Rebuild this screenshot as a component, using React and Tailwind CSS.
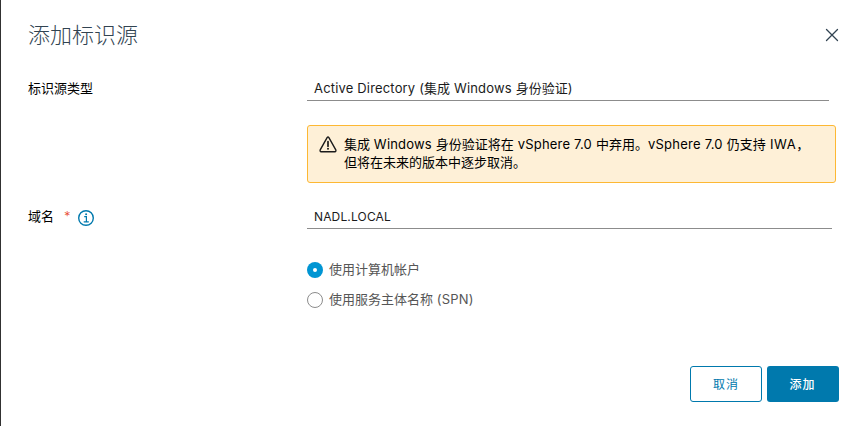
import React from "react";

function L({ children, className = "tracking-[0.17px]" }) {
  return <span className={"whitespace-pre " + className}>{children}</span>;
}

function CloseIcon() {
  return (
    <svg width="14" height="14" viewBox="0 0 14 14" fill="none" stroke="#314351" strokeWidth="1.3" strokeLinecap="round">
      <path d="M1.5 1.5 12.5 12.5M12.5 1.5 1.5 12.5" />
    </svg>
  );
}

function WarningIcon() {
  return (
    <svg width="18" height="17" viewBox="0 0 18 17" fill="none" stroke="#1b1b1b" strokeWidth="1.4" strokeLinejoin="round" strokeLinecap="round">
      <path d="M8.1 1.6 1.2 13.9Q.7 15.6 2.2 15.8H15.8Q17.300 15.6 16.8 13.9L9.900 1.600Q9 .5 8.100 1.600Z" />
      <path d="M9 5.500V10.200" strokeWidth="1.700" />
      <circle cx="9" cy="12.700" r="1" fill="#1b1b1b" stroke="none" />
    </svg>
  );
}

function InfoIcon() {
  return (
    <svg width="16" height="16" viewBox="0 0 16 16" fill="none" stroke="#0079ad" strokeWidth="1.4">
      <circle cx="8" cy="8" r="7.300" />
      <path d="M6.200 6.700H8.400V11.700M5.700 11.800H10.800" strokeWidth="1.200" />
      <circle cx="8.100" cy="4.200" r="1" fill="#0079ad" stroke="none" />
    </svg>
  );
}

export default function App() {
  return (
    <div className="flex h-[426px] w-[863px] flex-col border-l border-[#313131] bg-white pl-[27px] font-['Inter','Noto_Sans_CJK_SC',sans-serif] text-[13px] leading-[18px] text-black">
      <header className="flex h-[70px] items-center justify-between pr-[24px]">
        <h1 className="text-[22px] font-light leading-7 text-[#314351]">添加标识源</h1>
        <button className="block" aria-label="关闭"><CloseIcon /></button>
      </header>

      <div className="flex h-[55px] pt-[9px]">
        <div className="w-[279px]">标识源类型</div>
        <div className="h-[22px] w-[522px] border-b border-[#8c8c8c] pl-[7px] text-[#1b1b1b]">
          <L>Active Directory (</L>集成<L> Windows </L>身份验证<L>)</L>
        </div>
      </div>

      <div className="ml-[279px] flex h-[58px] w-[529px] rounded-[3px] border border-[#fdb833] bg-[#fef0d7] pl-[11px] pt-[9px]">
        <div className="mr-[7px] mt-px w-[18px] shrink-0"><WarningIcon /></div>
        <div className="whitespace-nowrap">
          <div>
            集成<L className="tracking-[0.2px]"> Windows </L>身份验证将在<L className="tracking-[0.2px]"> vSphere 7.0 </L>中弃用。<L className="tracking-[0.25px]">vSphere 7.0 </L>仍支持<L className="tracking-[0.6px]"> IWA</L>，
          </div>
          <div>但将在未来的版本中逐步取消。</div>
        </div>
      </div>

      <div className="flex h-[78px] pt-[24px]">
        <div className="flex w-[279px] items-start">
          <span>域名</span>
          <span className="ml-[10px] font-light text-[#e8452a]">*</span>
          <span className="ml-[7px] mt-[3px]"><InfoIcon /></span>
        </div>
        <div className="h-[22px] w-[525px] border-b border-[#8c8c8c] pl-[7px] text-[12px] leading-5 tracking-[0.15px] text-[#1b1b1b]">
          NADL.LOCAL
        </div>
      </div>

      <div className="ml-[279px] flex flex-col gap-3 text-[#565656]">
        <label className="flex h-[18px] items-center gap-[6px]">
          <span className="flex size-4 items-center justify-center rounded-full bg-[#0095d3]">
            <span className="size-1 rounded-full bg-white" />
          </span>
          <span className="-mt-[2px]">使用计算机帐户</span>
        </label>
        <label className="flex h-[18px] items-center gap-[6px]">
          <span className="size-4 rounded-full border border-[#8c8c8c]" />
          <span className="-mt-[2px]">使用服务主体名称<L> (SPN)</L></span>
        </label>
      </div>

      <footer className="mt-auto flex justify-end gap-[5px] pb-[24px] pr-[24px]">
        <button className="h-9 w-[72px] rounded-[3px] border border-[#0079ad] pt-[2px] text-[12px] tracking-[0.9px] text-[#0079ad]">取消</button>
        <button className="h-9 w-[72px] rounded-[3px] bg-[#0079ad] pt-[2px] pr-px text-[12px] font-medium tracking-[0.9px] text-white">添加</button>
      </footer>
    </div>
  );
}
